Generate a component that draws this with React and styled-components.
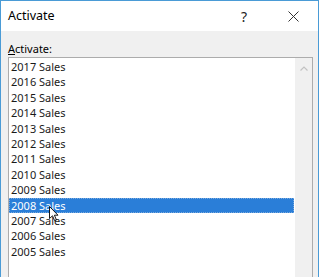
import React from "react";
import styled, { createGlobalStyle } from "styled-components";

const Global = createGlobalStyle`
  html, body { margin: 0; padding: 0; background: #ffffff; }
  body { font-family: "Noto Sans", "Open Sans", sans-serif; }
`;

const Window = styled.div`
  box-sizing: border-box;
  width: 319px;
  height: 277px;
  border: 1px solid #4a9bd6;
  border-bottom: none;
  display: flex;
  flex-direction: column;
  overflow: hidden;
  background: #f0f0f0;
`;

const TitleBar = styled.div`
  height: 30px;
  background: #ffffff;
  display: flex;
  align-items: center;
  padding-left: 7px;
  flex-shrink: 0;
`;

const Title = styled.div`
  font-size: 12.5px;
  color: #000;
  flex: 1;
  padding-bottom: 1px;
`;

const TitleButton = styled.div`
  width: ${(p) => p.$w}px;
  height: 30px;
  display: flex;
  align-items: center;
  justify-content: center;
  color: #222;
  font-size: 14px;
`;

const Body = styled.div`
  flex: 1;
  padding: 10px 5px 0 7px;
  display: flex;
  flex-direction: column;
`;

const Label = styled.div`
  font-size: 11px;
  color: #000;
  line-height: 15px;
  height: 16px;
  u { text-decoration: underline; text-underline-offset: 1px; }
`;

const ListBox = styled.div`
  flex: 1;
  background: #ffffff;
  border: 1px solid #acacac;
  border-bottom: none;
  display: flex;
  gap: 1px;
  position: relative;
`;

const Items = styled.div`
  width: 285px;
  padding-top: 1px;
  display: flex;
  flex-direction: column;
`;

const Item = styled.div`
  height: 15.4px;
  box-sizing: border-box;
  padding-left: 2px;
  font-size: 11px;
  line-height: 16px;
  color: ${(p) => (p.$selected ? "#ffffff" : "#1a1a1a")};
  background: ${(p) => (p.$selected ? "#2a7ed8" : "transparent")};
  outline: ${(p) => (p.$selected ? "1px dotted #7aa9dc" : "none")};
  outline-offset: -1px;
  white-space: nowrap;
`;

const ScrollBar = styled.div`
  width: 17px;
  background: #f0f0f0;
  display: flex;
  justify-content: center;
  padding-top: 8px;
  box-sizing: border-box;
`;

const Cursor = styled.svg`
  position: absolute;
  left: 40px;
  top: 148px;
`;

const items = [
  "2017 Sales",
  "2016 Sales",
  "2015 Sales",
  "2014 Sales",
  "2013 Sales",
  "2012 Sales",
  "2011 Sales",
  "2010 Sales",
  "2009 Sales",
  "2008 Sales",
  "2007 Sales",
  "2006 Sales",
  "2005 Sales",
];

export default function App() {
  return (
    <>
      <Global />
      <Window>
        <TitleBar>
          <Title>Activate</Title>
          <TitleButton $w={48}>?</TitleButton>
          <TitleButton $w={50}>
            <svg width="11" height="11" viewBox="0 0 11 11">
              <path d="M0.5 0.5 L10.5 10.5 M10.5 0.5 L0.5 10.5" stroke="#333" strokeWidth="1" fill="none" />
            </svg>
          </TitleButton>
        </TitleBar>
        <Body>
          <Label>
            <u>A</u>ctivate:
          </Label>
          <ListBox>
            <Items>
              {items.map((t) => (
                <Item key={t} $selected={t === "2008 Sales"}>
                  {t}
                </Item>
              ))}
            </Items>
            <ScrollBar>
              <svg width="8" height="5" viewBox="0 0 8 5">
                <path d="M0.5 4.5 L4 1 L7.5 4.5" stroke="#c2c2c2" strokeWidth="1.2" fill="none" />
              </svg>
            </ScrollBar>
            <Cursor width="10" height="16" viewBox="0 0 10 16">
              <path
                d="M0.5 0.5 L0.5 12.5 L3.5 9.8 L5.6 14.6 L7.4 13.8 L5.4 9.2 L9 9.2 Z"
                fill="#ffffff"
                stroke="#000"
                strokeWidth="0.9"
                strokeLinejoin="round"
              />
            </Cursor>
          </ListBox>
        </Body>
      </Window>
    </>
  );
}
